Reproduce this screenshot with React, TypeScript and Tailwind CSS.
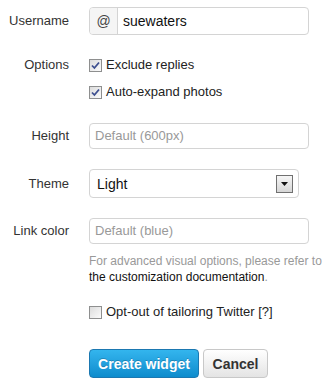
import React from 'react';

function Box({ checked }: { checked?: boolean }) {
  return (
    <span className="relative flex h-[13px] w-[13px] shrink-0 items-center justify-center border border-[#8e8f8f] bg-gradient-to-br from-[#dcdcdc] to-[#fbfbfb]">
      {checked && (
        <svg width="9" height="9" viewBox="0 0 9 9">
          <path d="M1 4.5 L3.4 7 L8 1.5" fill="none" stroke="#3d4f8f" strokeWidth="1.8" />
        </svg>
      )}
    </span>
  );
}

function Row({ label, children, className }: { label?: string; children: React.ReactNode; className?: string }) {
  return (
    <div className={'flex items-center ' + (className ?? '')}>
      <div className="w-[69px] shrink-0 text-right text-[#333]">{label}</div>
      <div className="ml-[20px] flex items-center">{children}</div>
    </div>
  );
}

export default function App() {
  return (
    <div className="h-[386px] w-[335px] overflow-hidden bg-white pt-[7px] font-['Liberation_Sans',Arial,sans-serif] text-[13px] leading-[16px] text-[#333]">
      <Row label="Username" className="h-[28px]">
        <div className="flex h-[28px] w-[220px] overflow-hidden rounded-[4px] border border-[#d4d4d4]">
          <div className="flex w-[28px] items-center justify-center border-r border-[#d4d4d4] bg-[#f5f5f5] text-[14px] text-[#444]">@</div>
          <div className="flex items-center pl-[5px] text-[14px] text-[#111]">suewaters</div>
        </div>
      </Row>

      <Row label="Options" className="mt-[20px] h-[20px]">
        <label className="flex items-center gap-[4px] text-[#222]">
          <Box checked />
          <span>Exclude replies</span>
        </label>
      </Row>
      <Row className="mt-[7px] h-[20px]">
        <label className="flex items-center gap-[4px] text-[#222]">
          <Box checked />
          <span>Auto-expand photos</span>
        </label>
      </Row>

      <Row label="Height" className="mt-[21px] h-[26px]">
        <div className="flex h-[26px] w-[220px] items-center rounded-[4px] border border-[#d4d4d4] pl-[5px] text-[#999]">
          Default (600px)
        </div>
      </Row>

      <Row label="Theme" className="mt-[20px] h-[29px]">
        <div className="flex h-[29px] w-[210px] items-center justify-between rounded-[4px] border border-[#d4d4d4] pl-[7px] pr-[5px] text-[14px] text-[#111]">
          <span>Light</span>
          <span className="flex h-[18px] w-[17px] items-center justify-center border border-[#707070] bg-gradient-to-b from-[#f6f6f6] to-[#d6d6d6]">
            <svg width="7" height="4" viewBox="0 0 7 4">
              <path d="M0 0 H7 L3.5 4 Z" fill="#111" />
            </svg>
          </span>
        </div>
      </Row>

      <Row label="Link color" className="mt-[20px] h-[26px]">
        <div className="flex h-[26px] w-[220px] items-center rounded-[4px] border border-[#d4d4d4] pl-[5px] text-[#999]">
          Default (blue)
        </div>
      </Row>

      <div className="ml-[89px] mt-[9px] text-[12px] leading-[16px] text-[#999]">
        <div className="whitespace-nowrap">For advanced visual options, please refer to</div>
        <div>
          <span className="text-[#111]">the customization documentation</span>.
        </div>
      </div>

      <Row className="mt-[17px] h-[20px]">
        <label className="flex items-center gap-[4px] text-[#222]">
          <Box />
          <span>Opt-out of tailoring Twitter [?]</span>
        </label>
      </Row>

      <Row className="mt-[27px] h-[29px]">
        <div className="flex gap-[4px]">
          <button className="h-[29px] w-[110px] rounded-[4px] border border-[#1b78b1] bg-gradient-to-b from-[#33b5ee] to-[#0c8ccd] text-[14px] font-bold text-white [text-shadow:0_-1px_0_rgba(0,0,0,0.2)]">
            Create widget
          </button>
          <button className="h-[29px] w-[65px] rounded-[4px] border border-[#c8c8c8] bg-gradient-to-b from-[#ffffff] to-[#e4e4e4] text-[14px] font-bold text-[#333]">
            Cancel
          </button>
        </div>
      </Row>
    </div>
  );
}
